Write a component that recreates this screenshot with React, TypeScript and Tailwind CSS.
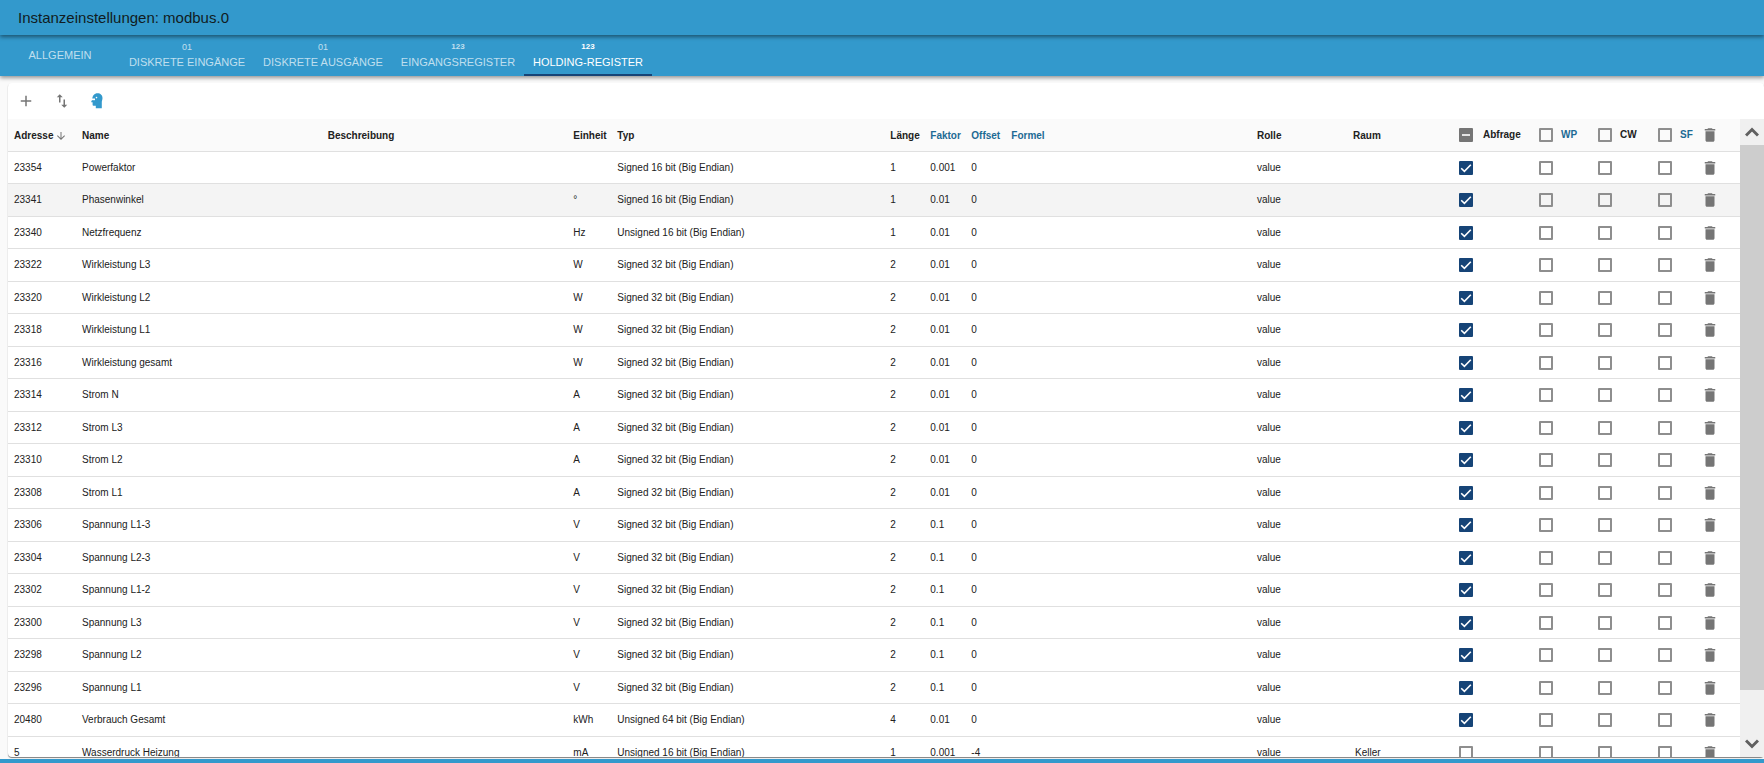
import React, { useState } from "react";
import { MdAdd, MdArrowDownward, MdImportExport, MdDelete } from "react-icons/md";

type Row = {
  address: number;
  name: string;
  unit: string;
  type: string;
  len: number;
  factor: string;
  offset: string;
  room?: string;
  poll: boolean;
};

const S16 = "Signed 16 bit (Big Endian)";
const U16 = "Unsigned 16 bit (Big Endian)";
const S32 = "Signed 32 bit (Big Endian)";
const U64 = "Unsigned 64 bit (Big Endian)";

const row = (
  address: number,
  name: string,
  unit: string,
  type: string,
  len: number,
  factor: string,
  offset = "0",
  poll = true,
  room = "",
): Row => ({ address, name, unit, type, len, factor, offset, poll, room });

const rows: Row[] = [
  row(23354, "Powerfaktor", "", S16, 1, "0.001"),
  row(23341, "Phasenwinkel", "°", S16, 1, "0.01"),
  row(23340, "Netzfrequenz", "Hz", U16, 1, "0.01"),
  row(23322, "Wirkleistung L3", "W", S32, 2, "0.01"),
  row(23320, "Wirkleistung L2", "W", S32, 2, "0.01"),
  row(23318, "Wirkleistung L1", "W", S32, 2, "0.01"),
  row(23316, "Wirkleistung gesamt", "W", S32, 2, "0.01"),
  row(23314, "Strom N", "A", S32, 2, "0.01"),
  row(23312, "Strom L3", "A", S32, 2, "0.01"),
  row(23310, "Strom L2", "A", S32, 2, "0.01"),
  row(23308, "Strom L1", "A", S32, 2, "0.01"),
  row(23306, "Spannung L1-3", "V", S32, 2, "0.1"),
  row(23304, "Spannung L2-3", "V", S32, 2, "0.1"),
  row(23302, "Spannung L1-2", "V", S32, 2, "0.1"),
  row(23300, "Spannung L3", "V", S32, 2, "0.1"),
  row(23298, "Spannung L2", "V", S32, 2, "0.1"),
  row(23296, "Spannung L1", "V", S32, 2, "0.1"),
  row(20480, "Verbrauch Gesamt", "kWh", U64, 4, "0.01"),
  row(5, "Wasserdruck Heizung", "mA", U16, 1, "0.001", "-4", false, "Keller"),
];

const tabs = [
  { label: "ALLGEMEIN", mark: "", width: "w-30" },
  { label: "DISKRETE EINGÄNGE", mark: "01", width: "w-[134px]" },
  { label: "DISKRETE AUSGÄNGE", mark: "01", width: "w-[138px]" },
  { label: "EINGANGSREGISTER", mark: "123", width: "w-[132px]" },
  { label: "HOLDING-REGISTER", mark: "123", width: "w-32" },
];

const columnWidths = [
  "w-[68px]", "", "", "w-11", "w-[273px]", "w-10", "w-[41px]", "w-10", "",
  "w-24", "w-[106px]", "w-20", "w-[59px]", "w-[60px]", "w-[43px]", "w-[45px]",
];

function Check({
  label,
  initial = false,
  mixed = false,
}: {
  label: string;
  initial?: boolean;
  mixed?: boolean;
}) {
  const [on, setOn] = useState(initial);
  return (
    <span className="grid size-3.5 shrink-0">
      <input
        type="checkbox"
        aria-label={label}
        checked={on}
        onChange={(e) => setOn(e.target.checked)}
        className={
          "col-start-1 row-start-1 size-3.5 appearance-none rounded-[1px] " +
          (mixed ? "bg-[#757575]" : on ? "bg-[#164477]" : "border-2 border-[#8e8e8e]")
        }
      />
      {(mixed || on) && (
        <svg
          viewBox="0 0 14 14"
          className="pointer-events-none col-start-1 row-start-1 size-3.5 fill-none stroke-white"
          strokeWidth="1.6"
        >
          <path d={mixed ? "M3 7h8" : "M2.2 7.200l3.200 3.100 6.400-6.500"} />
        </svg>
      )}
    </span>
  );
}

function HeadIcon() {
  return (
    <svg viewBox="-2 0 16 16" className="size-4">
      <path
        d="M6.500.3C9.600.3 11.500 2.400 11.500 5c0 1.900-.7 3-.7 4.300v6H4.800v-2.600H2.500c-.6 0-.9-.4-.9-.9V9.300H.6c-.4 0-.5-.3-.4-.6L1.300 6.500C1.200 2.800 3.500.3 6.500.3z"
        fill="#3399cc"
      />
      <path d="M1 5.500h3v1.700H1z" fill="#fff" />
      <circle cx="5.500" cy="4.600" r=".8" fill="#fff" />
    </svg>
  );
}

function Table() {
  const blue = "text-[#1d6a94]";
  const base = "px-1.5 font-bold whitespace-nowrap";
  const text = base + " pt-0.5 pb-0";
  const th = base + " py-0";
  return (
    <table className="w-full table-fixed border-separate border-spacing-0 text-left text-[10px] leading-4 text-[#212121]">
      <colgroup>
        {columnWidths.map((w, i) => (
          <col key={i} className={w} />
        ))}
      </colgroup>
      <thead>
        <tr className="h-[33px] bg-[#fafafa] [&>th]:border-b [&>th]:border-[#e0e0e0]">
          <th className={text}>
            <button type="button" className="flex items-center gap-0.5">
              Adresse <MdArrowDownward className="size-3 text-[#757575]" />
            </button>
          </th>
          <th className={text}>Name</th>
          <th className={text}>Beschreibung</th>
          <th className={text}>Einheit</th>
          <th className={text}>Typ</th>
          <th className={text}>Länge</th>
          <th className={text + " " + blue}>Faktor</th>
          <th className={text + " " + blue}>Offset</th>
          <th className={text + " " + blue}>Formel</th>
          <th className={text}>Rolle</th>
          <th className={text}>Raum</th>
          <th className={th}>
            <span className="flex items-center gap-2.5">
              <Check label="Abfrage für alle" mixed /> Abfrage
            </span>
          </th>
          <th className={th + " " + blue}>
            <span className="flex items-center gap-2">
              <Check label="WP für alle" /> WP
            </span>
          </th>
          <th className={th}>
            <span className="flex items-center gap-2">
              <Check label="CW für alle" /> CW
            </span>
          </th>
          <th className={th + " " + blue}>
            <span className="flex items-center gap-2">
              <Check label="SF für alle" /> SF
            </span>
          </th>
          <th className={th}>
            <button type="button" aria-label="Alle löschen" className="block">
              <MdDelete className="size-[18px] text-[#757575]" />
            </button>
          </th>
        </tr>
      </thead>
      <tbody>
        {rows.map((r, i) => (
          <tr
            key={r.address}
            className={
              "odd:h-8 even:h-[33px] hover:bg-[#f4f4f4] [&>td]:border-b [&>td]:border-[#e0e0e0] [&>td]:px-1.5 [&>td]:py-0 [&>td]:whitespace-nowrap " +
              (i === 1 ? "bg-[#f4f4f4]" : "")
            }
          >
            <td>{r.address}</td>
            <td>{r.name}</td>
            <td></td>
            <td>{r.unit}</td>
            <td>{r.type}</td>
            <td>{r.len}</td>
            <td>{r.factor}</td>
            <td>{r.offset}</td>
            <td></td>
            <td>value</td>
            <td className="pl-2!">{r.room}</td>
            <td><Check label={`Abfrage ${r.address}`} initial={r.poll} /></td>
            <td><Check label={`WP ${r.address}`} /></td>
            <td><Check label={`CW ${r.address}`} /></td>
            <td><Check label={`SF ${r.address}`} /></td>
            <td>
              <button type="button" aria-label={`${r.address} löschen`} className="block">
                <MdDelete className="size-[18px] text-[#757575]" />
              </button>
            </td>
          </tr>
        ))}
      </tbody>
    </table>
  );
}

function Chevron({ d }: { d: string }) {
  return (
    <svg viewBox="0 0 14 10" className="h-2.5 w-3.5 fill-none stroke-[#606060]" strokeWidth="3">
      <path d={d} />
    </svg>
  );
}

export default function App() {
  const [active, setActive] = useState(4);
  return (
    <div className="flex h-screen flex-col overflow-hidden border-b-4 border-[#3399cc] bg-[#fafafa] font-['Liberation_Sans',Arial,sans-serif]">
      <header className="z-20 flex h-[35px] shrink-0 items-center bg-[#3399cc] px-[18px] shadow-[0_2px_4px_rgba(0,0,0,0.45)]">
        <h1 className="text-[15px] leading-5 text-[#111c22]">Instanzeinstellungen: modbus.0</h1>
      </header>
      <nav
        role="tablist"
        className="z-10 flex h-[41px] shrink-0 bg-[#3399cc] shadow-[0_2px_4px_rgba(0,0,0,0.4)]"
      >
        {tabs.map((t, i) => (
          <button
            key={t.label}
            type="button"
            role="tab"
            aria-selected={i === active}
            onClick={() => setActive(i)}
            className={
              "flex shrink-0 flex-col items-center justify-center border-b-2 text-[11px] leading-4 whitespace-nowrap " +
              t.width +
              (i === active ? " border-[#164477] text-white" : " border-transparent text-white/70")
            }
          >
            {t.mark && (
              <span className={t.mark === "01" ? "text-[9px] leading-3.5" : "text-[8px] leading-3.5 font-bold"}>
                {t.mark}
              </span>
            )}
            {t.label}
          </button>
        ))}
      </nav>
      <main className="mt-[7px] mb-0.5 ml-2 flex min-h-0 flex-1 flex-col rounded bg-white shadow-[0_1px_1px_rgba(0,0,0,0.5)]">
        <div className="flex h-9 shrink-0 items-center gap-[18px] pl-[9px] text-[#757575]">
          <button type="button" aria-label="Hinzufügen"><MdAdd className="size-[18px]" /></button>
          <button type="button" aria-label="Sortieren"><MdImportExport className="size-[18px]" /></button>
          <button type="button" aria-label="Expertenmodus"><HeadIcon /></button>
        </div>
        <div className="flex min-h-0 flex-1">
          <div className="min-w-0 flex-1 overflow-y-auto [scrollbar-width:none]">
            <Table />
          </div>
          <div className="flex w-6 shrink-0 flex-col bg-[#f0f0f0]">
            <button type="button" aria-label="Nach oben" className="flex h-[26px] items-center justify-center">
              <Chevron d="M1 8.500l6-6 6 6" />
            </button>
            <div className="flex flex-1 flex-col">
              <div className="h-[93%] bg-[#cdcdcd]" />
            </div>
            <button type="button" aria-label="Nach unten" className="flex h-[26px] items-center justify-center">
              <Chevron d="M1 1.500l6 6 6-6" />
            </button>
          </div>
        </div>
      </main>
    </div>
  );
}
